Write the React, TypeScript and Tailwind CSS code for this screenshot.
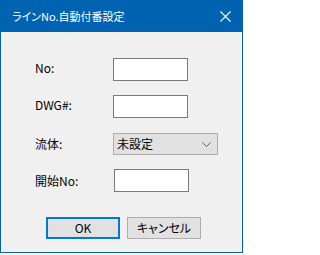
const font = { fontFamily: '"Noto Sans CJK JP", "Liberation Sans", sans-serif' }

function TextBox({ className = '' }: { className?: string }) {
  return <div className={`h-[23px] w-[75px] border border-[#7a7a7a] bg-white ${className}`} />
}

export default function App() {
  return (
    <div className="h-[255px] w-[244px] bg-white [font-feature-settings:'palt']" style={font}>
      <div className="flex h-[253px] w-[243px] flex-col border border-[#0063b1] bg-[#f0f0f0]">
        <div className="flex h-[31px] shrink-0 items-center justify-between bg-[#0063b1] pl-[11px] pr-[10px] text-[11px] text-white">
          <span className="leading-none">ラインNo.自動付番設定</span>
          <svg width="11" height="11" viewBox="0 0 11 11" className="mr-[1px]">
            <path d="M0.5 0.5 L10.5 10.5 M10.5 0.5 L0.5 10.5" stroke="white" strokeWidth="1.1" />
          </svg>
        </div>

        <div className="flex flex-col pl-[34px] pt-[26px] text-[12px] text-black">
          <div className="flex items-center">
            <span className="w-[78px] pb-[3px]">No:</span>
            <TextBox />
          </div>
          <div className="mt-[14px] flex items-center">
            <span className="w-[78px] pb-[3px]">DWG#:</span>
            <TextBox />
          </div>
          <div className="mt-[15px] flex items-center">
            <span className="w-[78px]">流体:</span>
            <div className="flex h-[22px] w-[105px] items-center justify-between border border-[#adadad] bg-[#e1e1e1] pl-[3px] pr-[6px] text-[12px]">
              <span>未設定</span>
              <svg width="9" height="5" viewBox="0 0 9 5">
                <path d="M0.5 0.5 L4.5 4.5 L8.5 0.5" stroke="#606060" strokeWidth="1" fill="none" />
              </svg>
            </div>
          </div>
          <div className="mt-[14px] flex items-center">
            <span className="w-[79px]">開始No:</span>
            <TextBox className="w-[74px]" />
          </div>
        </div>

        <div className="mt-[25px] flex gap-[7px] pl-[45px] text-[12px] text-black">
          <button className="flex h-[22px] w-[74px] items-center justify-center border-2 border-[#0078d7] bg-[#e1e1e1]">
            OK
          </button>
          <button className="flex h-[22px] w-[74px] items-center justify-center border border-[#adadad] bg-[#e1e1e1]">
            キャンセル
          </button>
        </div>
      </div>
    </div>
  )
}
